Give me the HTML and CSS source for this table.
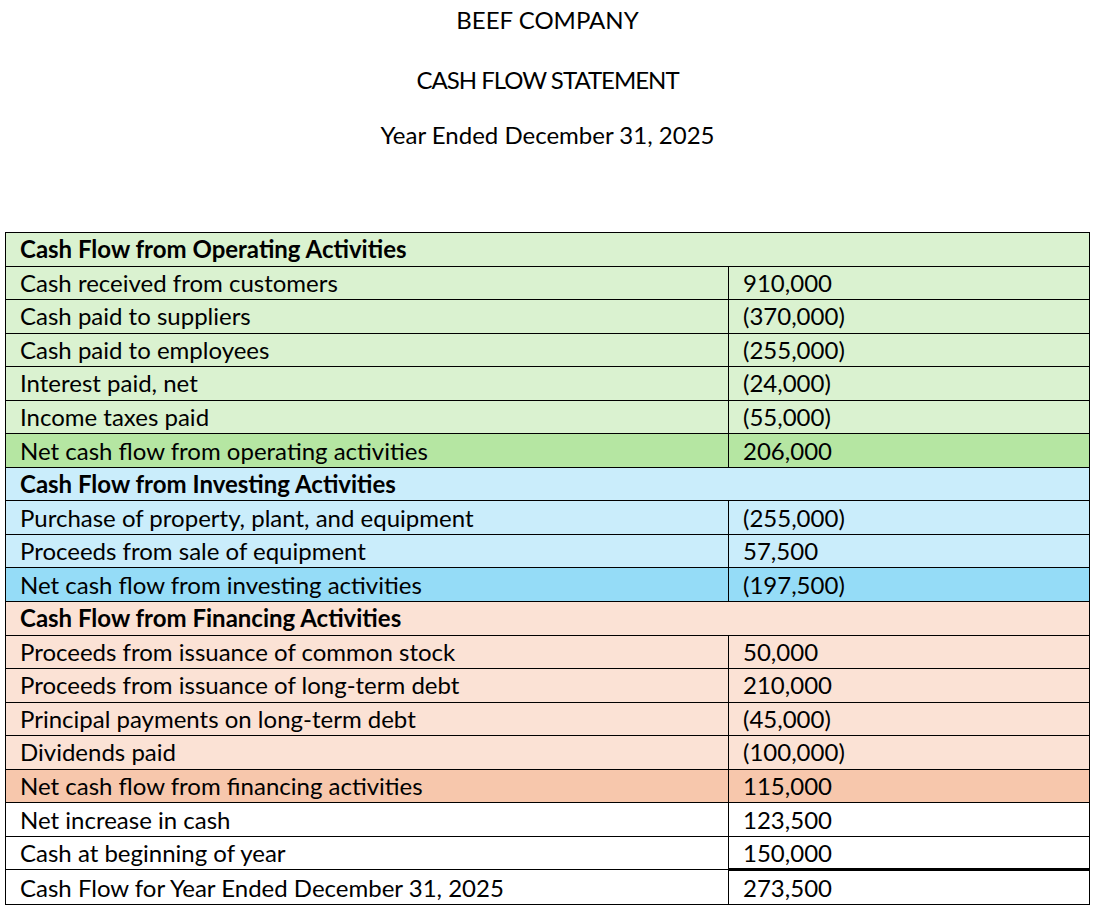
FILE: index.html
```html
<!DOCTYPE html>
<html>
<head>
<meta charset="utf-8">
<link rel="stylesheet" href="styles.css">
</head>
<body>
<div class="titles">
  <div class="t1">BEEF COMPANY</div>
  <div class="t2">CASH FLOW STATEMENT</div>
  <div class="t3">Year Ended December 31, 2025</div>
</div>
<table class="cf">
  <tr class="g hd"><td colspan="2">Cash Flow from Operating Activities</td></tr>
  <tr class="g"><td>Cash received from customers</td><td>910,000</td></tr>
  <tr class="g"><td>Cash paid to suppliers</td><td>(370,000)</td></tr>
  <tr class="g"><td>Cash paid to employees</td><td>(255,000)</td></tr>
  <tr class="g"><td>Interest paid, net</td><td>(24,000)</td></tr>
  <tr class="g"><td>Income taxes paid</td><td>(55,000)</td></tr>
  <tr class="g2"><td>Net cash flow from operating activities</td><td>206,000</td></tr>
  <tr class="b hd"><td colspan="2">Cash Flow from Investing Activities</td></tr>
  <tr class="b"><td>Purchase of property, plant, and equipment</td><td>(255,000)</td></tr>
  <tr class="b"><td>Proceeds from sale of equipment</td><td>57,500</td></tr>
  <tr class="b2"><td>Net cash flow from investing activities</td><td>(197,500)</td></tr>
  <tr class="o hd"><td colspan="2">Cash Flow from Financing Activities</td></tr>
  <tr class="o"><td>Proceeds from issuance of common stock</td><td>50,000</td></tr>
  <tr class="o"><td>Proceeds from issuance of long-term debt</td><td>210,000</td></tr>
  <tr class="o"><td>Principal payments on long-term debt</td><td>(45,000)</td></tr>
  <tr class="o"><td>Dividends paid</td><td>(100,000)</td></tr>
  <tr class="o2"><td>Net cash flow from financing activities</td><td>115,000</td></tr>
  <tr><td>Net increase in cash</td><td>123,500</td></tr>
  <tr><td>Cash at beginning of year</td><td class="dbl">150,000</td></tr>
  <tr class="last"><td>Cash Flow for Year Ended December 31, 2025</td><td>273,500</td></tr>
</table>
</body>
</html>
```
FILE: styles.css
```css
html, body {
  margin: 0;
  padding: 0;
  background: #ffffff;
}
body {
  font-family: Lato, "Liberation Sans", sans-serif;
  color: #000;
  padding: 0 5px;
}
.titles {
  text-align: center;
  font-size: 24px;
  line-height: 28px;
}
.t1 { padding-top: 6px; }
.t2 { margin-top: 32px; letter-spacing: -1px; }
.t3 { margin-top: 27px; }
.cf {
  margin-top: 83px;
  width: 1085px;
  border-collapse: collapse;
  font-size: 24px;
}
.cf td {
  border: 1px solid #000;
  height: 33.55px;
  padding: 0 0 0 14px;
  line-height: 30px;
  vertical-align: middle;
  box-sizing: border-box;
}
.cf td:first-child { width: 723px; }
.cf .hd td { font-weight: bold; }
.g td { background: #daf2d0; }
.g2 td { background: #b5e6a2; }
.b td { background: #caedfb; }
.b2 td { background: #95dcf7; }
.o td { background: #fbe2d5; }
.o2 td { background: #f7c7ac; }
.cf td.dbl { border-bottom: 3px solid #000; }
.last td { height: 35px; padding-top: 1px; }
```
